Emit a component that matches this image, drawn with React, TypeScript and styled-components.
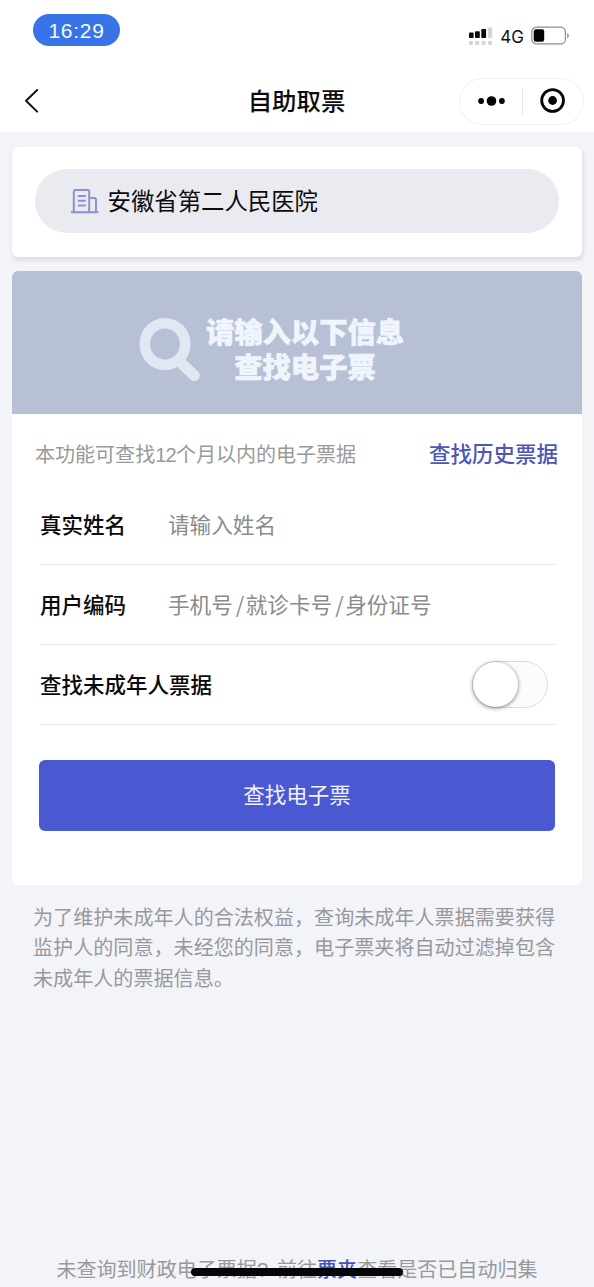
import React from 'react';
import styled, { createGlobalStyle } from 'styled-components';

const GlobalStyle = createGlobalStyle`
  * { box-sizing: border-box; }
  body {
    margin: 0;
    background: #f3f4f8;
    font-family: "Noto Sans CJK SC", sans-serif;
    color: #0b0b0d;
  }
`;

const Screen = styled.div`
  position: relative;
  width: 594px;
  height: 1287px;
  overflow: hidden;
  display: flex;
  flex-direction: column;
  background: #f3f4f8;
`;

const StatusBar = styled.div`
  height: 70px;
  flex: none;
  display: flex;
  justify-content: space-between;
  align-items: flex-start;
  padding: 14px 24px 0 33px;
  background: #fff;
`;

const Clock = styled.div`
  width: 87px;
  height: 32px;
  border-radius: 16px;
  background: #3873e8;
  color: #f0fbff;
  font: 400 21px/33px "Liberation Sans", sans-serif;
  letter-spacing: 0.7px;
  text-align: center;
`;

const Signals = styled.div`
  display: flex;
  align-items: center;
  height: 20px;
  margin-top: 12px;
`;

const Network = styled.span`
  font: 400 17px/20px Inter, sans-serif;
  margin: 1px 7px 0 7px;
  color: #111;
`;

const NavBar = styled.div`
  height: 62px;
  flex: none;
  display: grid;
  grid-template-columns: 1fr auto 1fr;
  align-items: center;
  padding: 0 10px 0 24px;
  background: #fff;
`;

const Title = styled.h1`
  margin: 0 0 2px -15px;
  font-size: 24.4px;
  line-height: 36px;
  font-weight: 500;
`;

const Capsule = styled.div`
  justify-self: end;
  width: 125px;
  height: 47px;
  border: 1px solid #f0f0f0;
  border-radius: 24px;
  display: grid;
  grid-template-columns: 62px 1px 1fr;
  align-items: center;
  justify-items: center;
`;

const CapsuleDivider = styled.div`
  width: 1px;
  height: 27px;
  background: #e6e6e6;
`;

const HospitalCard = styled.section`
  margin: 15px 12px 0;
  height: 110px;
  flex: none;
  padding: 22px 23px 0;
  background: #fff;
  border-radius: 6px;
  box-shadow: 1px 3px 5px rgba(60, 70, 80, 0.14);
`;

const HospitalPill = styled.div`
  height: 64px;
  border-radius: 32px;
  background: #eaeaf1;
  display: flex;
  align-items: center;
  gap: 7.5px;
  padding-left: 36px;
`;

const HospitalName = styled.span`
  font-size: 23.4px;
  line-height: 36px;
  margin-bottom: 3px;
`;

const FormCard = styled.section`
  margin: 14px 12px 0;
  height: 614px;
  flex: none;
  background: #fff;
  border-radius: 6px;
  overflow: hidden;
`;

const Banner = styled.div`
  height: 143px;
  padding: 12px 51px 0 0;
  display: flex;
  align-items: center;
  justify-content: center;
  gap: 5px;
  background: #b7c0d4;
`;

const BannerText = styled.div`
  display: flex;
  flex-direction: column;
  align-items: center;
  margin-bottom: 1px;
  font-size: 28.3px;
  line-height: 35.5px;
  font-weight: 900;
  color: #f0f5fd;
  -webkit-text-stroke: 0.6px #f0f5fd;
`;

const InfoRow = styled.div`
  display: flex;
  justify-content: space-between;
  align-items: center;
  height: 72px;
  padding: 7px 24px 0 23px;
`;

const InfoText = styled.span`
  font-size: 20.05px;
  color: #999;
`;

const Digits = styled.span`
  font-family: "Liberation Sans", sans-serif;
  letter-spacing: -0.8px;
`;

const HistoryLink = styled.a`
  font-size: 21.5px;
  line-height: 32px;
  margin-bottom: 2px;
  font-weight: 500;
  color: #4e56b6;
`;

const Fields = styled.div`
  margin-top: -1px;
  padding: 0 25px 0 28px;
`;

const Field = styled.div`
  height: 80px;
  display: flex;
  align-items: center;
  border-bottom: 1px solid #ededee;
`;

const Label = styled.span<{ $wide?: boolean }>`
  width: ${(p) => (p.$wide ? 'auto' : '128px')};
  flex: ${(p) => (p.$wide ? '1' : 'none')};
  margin-bottom: 2px;
  font-size: 21.5px;
  line-height: 32px;
  font-weight: 500;
  color: #0a0a0a;
`;

const Placeholder = styled.span`
  margin-bottom: 2px;
  font-size: 21.6px;
  line-height: 32px;
  color: #8b8b8b;
`;

const Slash = styled.span`
  margin: 0 1.5px 0 3px;
`;

const Switch = styled.div`
  width: 76px;
  height: 47px;
  margin-right: 9px;
  border: 1px solid #dcdcdc;
  border-radius: 24px;
  background: #fcfcfc;
`;

const Knob = styled.div`
  width: 45px;
  height: 45px;
  border-radius: 50%;
  background: #fff;
  box-shadow: 0 1px 4px rgba(0, 0, 0, 0.5);
`;

const SubmitButton = styled.button`
  display: block;
  width: 516px;
  height: 71px;
  margin: 35px 0 0 27px;
  padding: 0 0 4px;
  border: 0;
  border-radius: 6px;
  background: #4a58d2;
  color: #f0f2ff;
  font: 400 21.5px/32px "Noto Sans CJK SC", sans-serif;
`;

const Notice = styled.p`
  margin: 17px 36px 0 33px;
  font-size: 20.08px;
  line-height: 30.3px;
  color: #98989e;
  white-space: nowrap;
`;

const Footer = styled.footer`
  margin-top: auto;
  height: 34px;
  flex: none;
  text-align: center;
  font-size: 20.06px;
  line-height: 32px;
  color: #98989e;
  white-space: nowrap;
`;

const QuestionMark = styled.span`
  display: inline-block;
  width: 20px;
  font-family: "Liberation Sans", sans-serif;
  text-align: left;
`;

const FolderLink = styled.a`
  color: #4453b8;
  font-weight: 500;
`;

const HomeIndicator = styled.div`
  position: absolute;
  left: 191px;
  bottom: 11px;
  width: 212px;
  height: 8px;
  border-radius: 4px;
  background: #050608;
`;

const SignalIcon = () => (
  <svg width="25" height="20" viewBox="0 0 25 20">
    <g fill="#0a0a0a">
      <rect x="1" y="6.5" width="4.6" height="5.5" rx="0.8" />
      <rect x="7" y="5.3" width="4.8" height="6.7" rx="0.8" />
      <rect x="13.3" y="3" width="4.8" height="9" rx="0.8" />
    </g>
    <g fill="#d5d5d5">
      <rect x="20" y="1.5" width="4.2" height="10.5" rx="0.8" />
      <rect x="1" y="15" width="4" height="4" rx="0.8" />
      <rect x="7.2" y="15" width="4" height="4" rx="0.8" />
      <rect x="13.6" y="15" width="4" height="4" rx="0.8" />
      <rect x="20" y="15" width="4" height="4" rx="0.8" />
    </g>
  </svg>
);

const BatteryIcon = () => (
  <svg width="39" height="20" viewBox="0 0 39 20">
    <rect x="0.8" y="1.2" width="33.6" height="16.6" rx="4.6" fill="#fff" stroke="#8c8c8c" strokeWidth="1.2" />
    <rect x="2.7" y="3.2" width="10.5" height="12.6" rx="2.2" fill="#050505" />
    <path d="M36.2 7v5.4q1.6-.8 1.6-2.7T36.2 7z" fill="#8c8c8c" />
  </svg>
);

const BackIcon = () => (
  <svg width="16" height="26" viewBox="0 0 16 26">
    <path d="M13.2 2 2 12.800l11.200 10.800" fill="none" stroke="#111" strokeWidth="2" strokeLinecap="round" strokeLinejoin="round" />
  </svg>
);

const MoreIcon = () => (
  <svg width="28" height="12" viewBox="0 0 28 12">
    <circle cx="4.1" cy="6" r="2.9" />
    <circle cx="14.5" cy="6" r="4.8" />
    <circle cx="24.9" cy="6" r="2.9" />
  </svg>
);

const CloseIcon = () => (
  <svg width="26" height="26" viewBox="0 0 26 26">
    <circle cx="12.6" cy="12.5" r="10.9" fill="none" stroke="#050505" strokeWidth="2.8" />
    <circle cx="12.6" cy="12.5" r="4.4" fill="#050505" />
  </svg>
);

const BuildingIcon = () => (
  <svg width="29" height="26" viewBox="0 0 29 26" fill="none" stroke="#8f8fd2" strokeWidth="2">
    <path d="M0 24.2h27.5M2.8 24V3.7q0-1.7 1.7-1.7h12q1.7 0 1.7 1.7V24" />
    <path d="M18.5 10h5q1.5 0 1.5 1.5V24M6.8 8h8M6.8 12.8h8M6.8 17.6h8" />
  </svg>
);

const SearchIcon = () => (
  <svg width="62" height="66" viewBox="0 0 62 66" fill="none" stroke="#e2e7f4">
    <ellipse cx="26" cy="28" rx="20.2" ry="20.8" strokeWidth="10.6" />
    <path d="M40 45 55.300 59.500" strokeWidth="11" strokeLinecap="round" />
  </svg>
);

export default function App() {
  return (
    <>
      <GlobalStyle />
      <Screen>
        <StatusBar>
          <Clock>16:29</Clock>
          <Signals>
            <SignalIcon />
            <Network>4G</Network>
            <BatteryIcon />
          </Signals>
        </StatusBar>
        <NavBar>
          <BackIcon />
          <Title>自助取票</Title>
          <Capsule>
            <MoreIcon />
            <CapsuleDivider />
            <CloseIcon />
          </Capsule>
        </NavBar>
        <HospitalCard>
          <HospitalPill>
            <BuildingIcon />
            <HospitalName>安徽省第二人民医院</HospitalName>
          </HospitalPill>
        </HospitalCard>
        <FormCard>
          <Banner>
            <SearchIcon />
            <BannerText>
              <span>请输入以下信息</span>
              <span>查找电子票</span>
            </BannerText>
          </Banner>
          <InfoRow>
            <InfoText>
              本功能可查找<Digits>12</Digits>个月以内的电子票据
            </InfoText>
            <HistoryLink>查找历史票据</HistoryLink>
          </InfoRow>
          <Fields>
            <Field>
              <Label>真实姓名</Label>
              <Placeholder>请输入姓名</Placeholder>
            </Field>
            <Field>
              <Label>用户编码</Label>
              <Placeholder>
                手机号<Slash>/</Slash>就诊卡号<Slash>/</Slash>身份证号
              </Placeholder>
            </Field>
            <Field>
              <Label $wide>查找未成年人票据</Label>
              <Switch>
                <Knob />
              </Switch>
            </Field>
          </Fields>
          <SubmitButton>查找电子票</SubmitButton>
        </FormCard>
        <Notice>
          为了维护未成年人的合法权益，查询未成年人票据需要获得
          <br />
          监护人的同意，未经您的同意，电子票夹将自动过滤掉包含
          <br />
          未成年人的票据信息。
        </Notice>
        <Footer>
          未查询到财政电子票据<QuestionMark>?</QuestionMark>前往<FolderLink>票夹</FolderLink>查看是否已自动归集
        </Footer>
        <HomeIndicator />
      </Screen>
    </>
  );
}
